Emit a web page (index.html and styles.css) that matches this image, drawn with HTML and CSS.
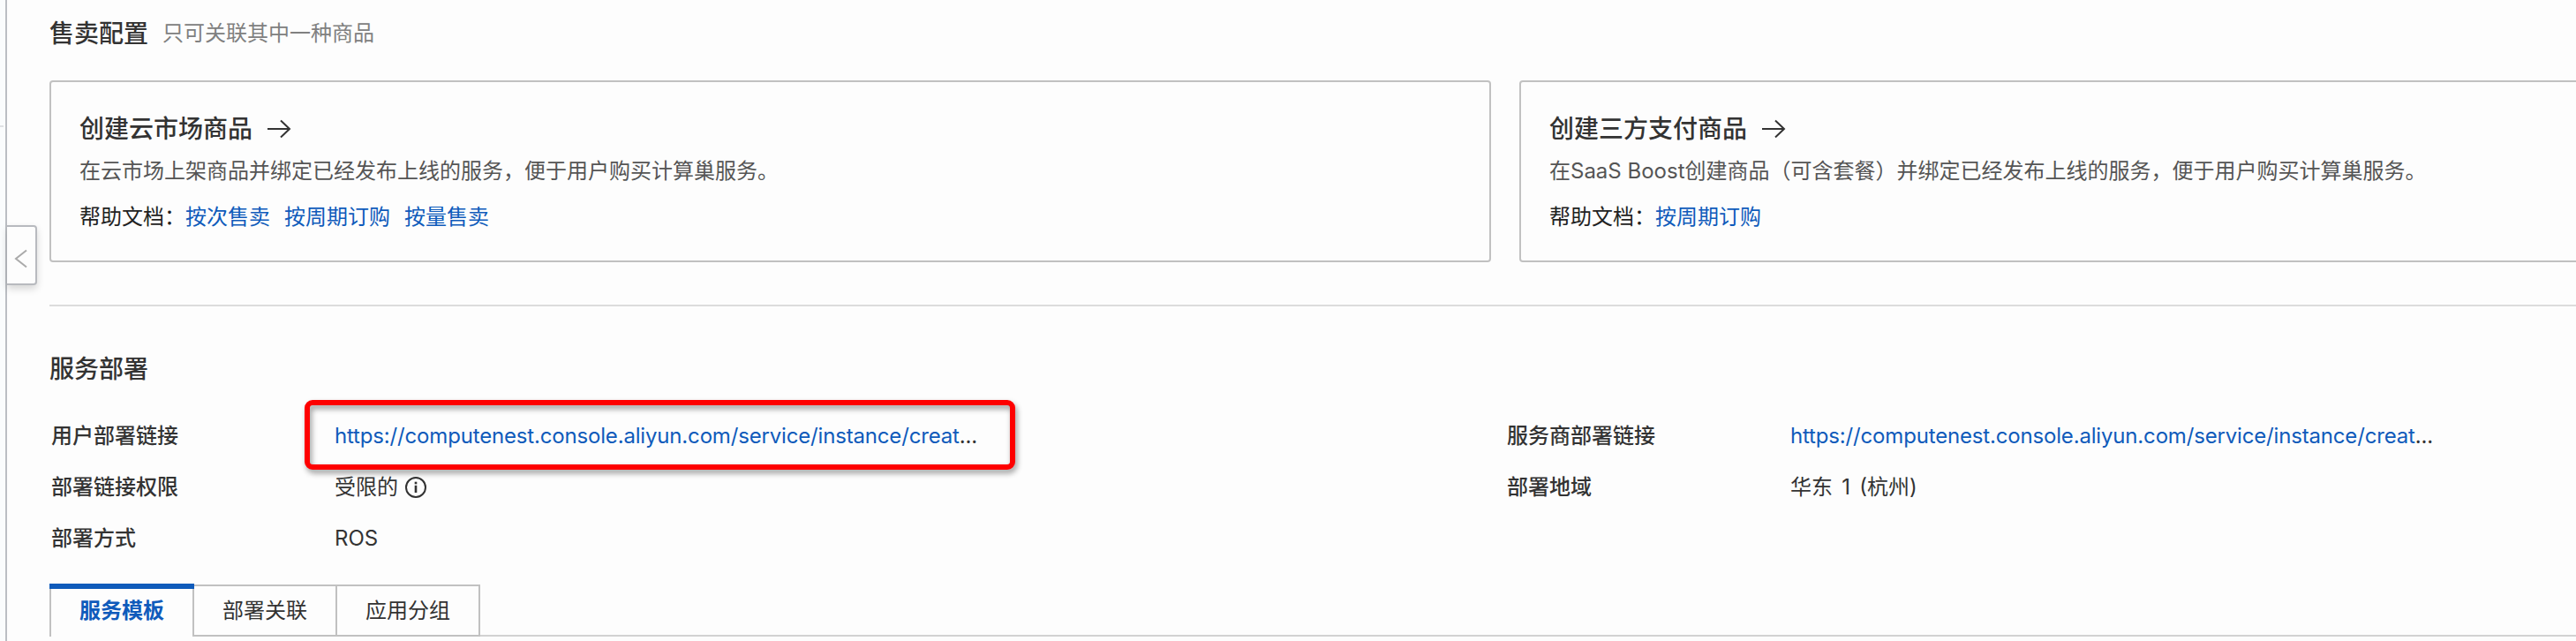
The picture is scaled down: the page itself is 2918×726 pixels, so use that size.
FILE: index.html
```html
<!DOCTYPE html>
<html lang="zh-CN">
<head>
<meta charset="utf-8">
<title>服务部署</title>
<link rel="stylesheet" href="styles.css">
</head>
<body>
<div class="page">
  <aside class="rail">
    <div class="rail-line"></div>
    <button class="rail-toggle" aria-label="收起">
      <svg width="16" height="22" viewBox="0 0 16 22"><path d="M14 1.5 2 11l12 9.500"/></svg>
    </button>
  </aside>
  <main class="main">
    <header class="section-head">
      <h2 class="section-title">售卖配置</h2>
      <span class="section-note">只可关联其中一种商品</span>
    </header>
    <div class="cards">
      <section class="card">
        <h3 class="card-title">创建云市场商品
          <svg class="arrow" width="28" height="24" viewBox="0 0 28 24"><path d="M1 12h25M16 2.500 26 12l-10 9.500"/></svg>
        </h3>
        <p class="card-desc">在云市场上架商品并绑定已经发布上线的服务，便于用户购买计算巢服务。</p>
        <p class="card-help"><span>帮助文档：</span><a class="link">按次售卖</a><a class="link">按周期订购</a><a class="link">按量售卖</a></p>
      </section>
      <section class="card">
        <h3 class="card-title">创建三方支付商品
          <svg class="arrow" width="28" height="24" viewBox="0 0 28 24"><path d="M1 12h25M16 2.500 26 12l-10 9.500"/></svg>
        </h3>
        <p class="card-desc">在SaaS Boost创建商品（可含套餐）并绑定已经发布上线的服务，便于用户购买计算巢服务。</p>
        <p class="card-help"><span>帮助文档：</span><a class="link">按周期订购</a></p>
      </section>
    </div>
    <hr class="divider">
    <h2 class="section-title deploy-title">服务部署</h2>
    <dl class="info">
      <dt>用户部署链接</dt>
      <dd class="marked"><span class="url"><a class="link">https://computenest.console.aliyun.com/service/instance/creat</a>...</span></dd>
      <dt>服务商部署链接</dt>
      <dd><span class="url"><a class="link">https://computenest.console.aliyun.com/service/instance/creat</a>...</span></dd>
      <dt>部署链接权限</dt>
      <dd class="with-icon">受限的
        <svg width="24" height="24" viewBox="0 0 24 24"><circle class="ring" cx="12" cy="12" r="11"/><rect x="10.700" y="9.800" width="2.600" height="8.200"/><rect x="10.700" y="5.700" width="2.600" height="2.600"/></svg>
      </dd>
      <dt>部署地域</dt>
      <dd class="region">华东 1 (杭州)</dd>
      <dt>部署方式</dt>
      <dd>ROS</dd>
    </dl>
    <nav class="tabs">
      <a class="tab active">服务模板</a>
      <a class="tab">部署关联</a>
      <a class="tab">应用分组</a>
      <span class="tabs-rest"></span>
    </nav>
  </main>
</div>
</body>
</html>
```
FILE: styles.css
```css
*, *::before, *::after { box-sizing: border-box; margin: 0; padding: 0; }

body {
  background: #fdfdfd;
  color: #333;
  font: 24px/36px Inter, "Noto Sans CJK SC", sans-serif;
  overflow: hidden;
}

.page { display: flex; height: 726px; overflow: hidden; }

.rail {
  position: relative;
  flex: none;
  width: 8px;
  padding-top: 142px;
  border-right: 2px solid #bbbec3;
  background: #fafcfd;
}
.rail-line { width: 4px; height: 2px; background: #dfe1e4; }
.rail-toggle {
  position: absolute;
  top: 255px;
  left: 8px;
  display: flex;
  align-items: center;
  width: 34px;
  height: 68px;
  padding-left: 8px;
  padding-top: 7px;
  border: 2px solid #b8babf;
  border-left: 0;
  border-radius: 0 4px 4px 0;
  background: #fdfdfd;
  box-shadow: 0 4px 8px rgba(0, 0, 0, .16);
}
.rail-toggle svg { fill: none; stroke: #aaa; stroke-width: 2; }

.main { flex: none; width: 3298px; margin-left: 48px; }

.section-head { display: flex; align-items: center; gap: 16px; height: 75px; }
.section-title { font-size: 28px; line-height: 40px; font-weight: 500; }
.section-note { color: #808080; }

.cards { display: grid; grid-template-columns: 1633px 1633px; gap: 32px; margin-top: 16px; }
.card { height: 206px; padding: 32px; border: 2px solid #c1c1c1; border-radius: 4px; }
.card-title { display: flex; align-items: center; gap: 16px; font-size: 28px; line-height: 42px; font-weight: 500; }
.arrow { fill: none; stroke: #333; stroke-width: 2; }
.card-desc { margin-top: 9px; color: #555; }
.card-help { display: flex; gap: 16px; margin-top: 16px; color: #222; }
.card-help span { margin-right: -16px; }
.link { color: #0f5bbb; }

.divider { height: 2px; margin-top: 48px; border: 0; background: #dcdcdc; }
.deploy-title { margin-top: 51px; }

.info {
  display: grid;
  grid-template-columns: 321px 1328px 321px 1327px;
  grid-auto-rows: 58px;
  align-items: center;
  margin: 27px 0 0 2px;
}
.info dt { font-weight: 500; }
.url { letter-spacing: -.17px; }
.region { word-spacing: 3.500px; }
.marked { position: relative; }
.marked::after {
  content: "";
  position: absolute;
  top: -23px;
  left: -34px;
  width: 805px;
  height: 79px;
  border: 6px solid #fe0000;
  border-radius: 9px;
  filter: drop-shadow(2px 4px 3px rgba(0, 0, 0, .4));
}
.with-icon { display: flex; align-items: center; gap: 8px; }
.with-icon svg { fill: #333; }
.with-icon .ring { fill: none; stroke: #333; stroke-width: 2; }

.tabs { display: flex; margin-top: 22px; height: 60px; }
.tab {
  height: 59px;
  margin-top: 1px;
  padding: 10px 32px 0;
  border: solid #c1c1c1;
  border-width: 2px 2px 2px 0;
}
.tab.active {
  position: relative;
  height: 60px;
  margin-top: 0;
  padding-top: 13px;
  border-width: 0 2px;
  color: #0f5bbb;
  font-weight: 700;
}
.tab.active::before {
  content: "";
  position: absolute;
  top: 0;
  left: -2px;
  right: -2px;
  height: 6px;
  background: #0f5bbb;
}
.tabs-rest { flex: 1; border-bottom: 2px solid #d2d2d2; }
```
